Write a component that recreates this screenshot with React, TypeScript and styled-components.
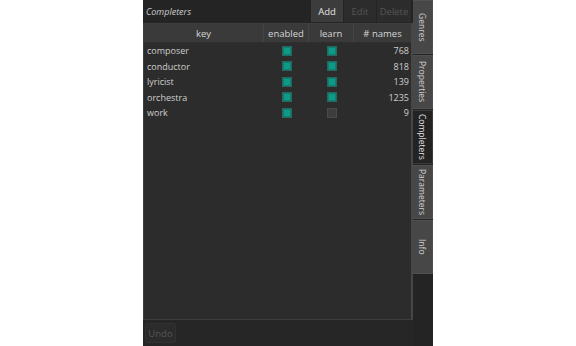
import React from 'react'
import styled, { createGlobalStyle } from 'styled-components'

const GlobalStyle = createGlobalStyle`
  html, body {
    margin: 0;
    padding: 0;
    background: #ffffff;
  }
  * {
    box-sizing: border-box;
  }
`

const Page = styled.div`
  width: 576px;
  height: 346px;
  display: flex;
  justify-content: center;
  font-family: 'Open Sans', 'Noto Sans', sans-serif;
  font-size: 9px;
  color: #cfcfcf;
`

const Window = styled.div`
  width: 290px;
  height: 346px;
  display: flex;
  background: #262626;
`

const MainColumn = styled.div`
  width: 270px;
  display: flex;
  flex-direction: column;
`

const TopBar = styled.div`
  height: 22px;
  display: flex;
  align-items: stretch;
  background: #242424;
  padding-left: 3px;
`

const PanelTitle = styled.div`
  flex: 1;
  display: flex;
  align-items: center;
  font-style: italic;
  color: #cdcdcd;
`

const BarButton = styled.div<{ $active?: boolean; $w: number }>`
  width: ${(p) => p.$w}px;
  margin-left: 1px;
  display: flex;
  align-items: center;
  justify-content: center;
  background: ${(p) => (p.$active ? '#3c3c3c' : '#2c2c2c')};
  color: ${(p) => (p.$active ? '#e4e4e4' : '#555555')};
  font-size: 9.5px;
`

const TableFrame = styled.div`
  flex: 1;
  margin-top: 1px;
  border: 1px solid #3e3e3e;
  border-right: 2px solid #474747;
  background: #2c2c2c;
  display: flex;
  flex-direction: column;
`

const columns = '120px 45px 45px 1fr'

const HeaderRow = styled.div`
  display: grid;
  grid-template-columns: ${columns};
  height: 19px;
  background: #3a3a3a;
  border-bottom: 1px solid #2f2f2f;
`

const HeaderCell = styled.div<{ $last?: boolean }>`
  display: flex;
  align-items: center;
  justify-content: center;
  color: #d6d6d6;
  font-size: 9.5px;
  border-right: ${(p) => (p.$last ? 'none' : '1px solid #444444')};
`

const Row = styled.div`
  display: grid;
  grid-template-columns: ${columns};
  height: 15.5px;
`

const KeyCell = styled.div`
  display: flex;
  align-items: center;
  padding-left: 3px;
  color: #cfcfcf;
`

const CheckCell = styled.div`
  display: flex;
  align-items: center;
  justify-content: center;
`

const NumCell = styled.div`
  display: flex;
  align-items: center;
  justify-content: flex-end;
  padding-right: 2px;
  color: #cfcfcf;
`

const Check = styled.div<{ $on: boolean }>`
  width: 10px;
  height: 10px;
  border: 1px solid ${(p) => (p.$on ? '#26675f' : '#4a4a4a')};
  background: ${(p) => (p.$on ? '#0d9a86' : '#3d3d3d')};
  box-shadow: ${(p) => (p.$on ? 'inset 0 0 0 1px #137e6f' : 'none')};
`

const BottomBar = styled.div`
  height: 26px;
  display: flex;
  align-items: center;
  padding-left: 2px;
`

const UndoButton = styled.div`
  width: 31px;
  height: 20px;
  display: flex;
  align-items: center;
  justify-content: center;
  background: #2b2b2b;
  border: 1px solid #313131;
  border-radius: 2px;
  color: #565656;
  font-size: 9.5px;
`

const TabBar = styled.div`
  width: 20px;
  display: flex;
  flex-direction: column;
  background: #242424;
`

const Tab = styled.div<{ $selected?: boolean }>`
  height: 54px;
  margin-bottom: 1px;
  display: flex;
  align-items: center;
  justify-content: center;
  writing-mode: vertical-rl;
  background: ${(p) => (p.$selected ? '#232323' : '#474747')};
  border: 1px solid ${(p) => (p.$selected ? '#3a3a3a' : '#505050')};
  border-left: none;
  color: ${(p) => (p.$selected ? '#e0e0e0' : '#d0d0d0')};
  font-size: 8.5px;
`

interface ICompleter {
  key: string
  enabled: boolean
  learn: boolean
  names: number
}

const completers: ICompleter[] = [
  { key: 'composer', enabled: true, learn: true, names: 768 },
  { key: 'conductor', enabled: true, learn: true, names: 818 },
  { key: 'lyricist', enabled: true, learn: true, names: 139 },
  { key: 'orchestra', enabled: true, learn: true, names: 1235 },
  { key: 'work', enabled: true, learn: false, names: 9 },
]

const tabs = ['Genres', 'Properties', 'Completers', 'Parameters', 'Info']

const App: React.FC = () => {
  return (
    <Page>
      <GlobalStyle />
      <Window>
        <MainColumn>
          <TopBar>
            <PanelTitle>Completers</PanelTitle>
            <BarButton $active $w={32}>
              Add
            </BarButton>
            <BarButton $w={32}>Edit</BarButton>
            <BarButton $w={34}>Delete</BarButton>
            <div style={{ width: 2 }} />
          </TopBar>
          <TableFrame>
            <HeaderRow>
              <HeaderCell>key</HeaderCell>
              <HeaderCell>enabled</HeaderCell>
              <HeaderCell>learn</HeaderCell>
              <HeaderCell $last># names</HeaderCell>
            </HeaderRow>
            {completers.map((c) => (
              <Row key={c.key}>
                <KeyCell>{c.key}</KeyCell>
                <CheckCell>
                  <Check $on={c.enabled} />
                </CheckCell>
                <CheckCell>
                  <Check $on={c.learn} />
                </CheckCell>
                <NumCell>{c.names}</NumCell>
              </Row>
            ))}
          </TableFrame>
          <BottomBar>
            <UndoButton>Undo</UndoButton>
          </BottomBar>
        </MainColumn>
        <TabBar>
          {tabs.map((t) => (
            <Tab key={t} $selected={t === 'Completers'}>
              {t}
            </Tab>
          ))}
        </TabBar>
      </Window>
    </Page>
  )
}

export default App
